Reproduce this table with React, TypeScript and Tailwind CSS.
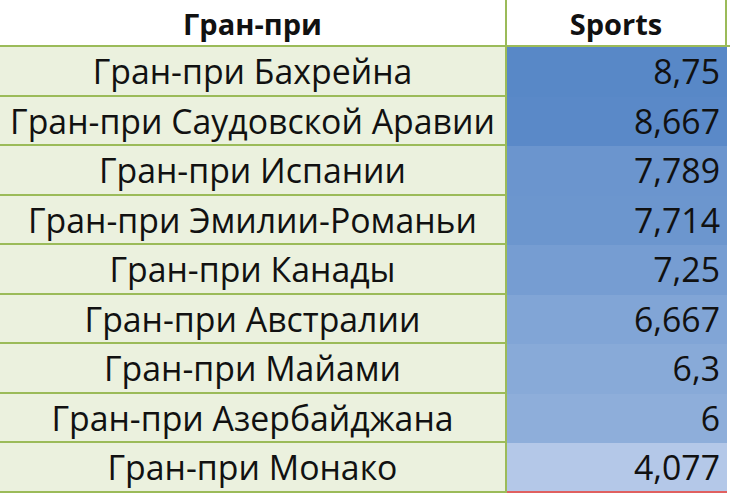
import React from "react";

const rows: [string, string, number][] = [
  ["Гран-при Бахрейна", "8,75", 8.75],
  ["Гран-при Саудовской Аравии", "8,667", 8.667],
  ["Гран-при Испании", "7,789", 7.789],
  ["Гран-при Эмилии-Романьи", "7,714", 7.714],
  ["Гран-при Канады", "7,25", 7.25],
  ["Гран-при Австралии", "6,667", 6.667],
  ["Гран-при Майами", "6,3", 6.3],
  ["Гран-при Азербайджана", "6", 6],
  ["Гран-при Монако", "4,077", 4.077],
];

const c0 = [88, 136, 199];
const c1 = [180, 200, 232];
function colorFor(v: number) {
  const t = (8.75 - v) / (8.75 - 4.077);
  const c = c0.map((a, i) => Math.round(a + (c1[i] - a) * t));
  return `rgb(${c[0]},${c[1]},${c[2]})`;
}

export default function App() {
  return (
    <div
      className="w-[730px] h-[495px] bg-white overflow-hidden text-[#111]"
      style={{ fontFamily: '"Open Sans", "Noto Sans", sans-serif' }}
    >
      <div className="flex h-[47px] border-b-2 border-[#9bbb59]">
        <div className="w-[507px] flex items-center justify-center border-r-2 border-[#9bbb59] text-[29px] font-bold pt-[2px]">
          Гран-при
        </div>
        <div className="w-[220px] flex items-center justify-center border-r-2 border-[#9bbb59] text-[29px] font-bold pt-[2px]">
          Sports
        </div>
      </div>
      {rows.map(([name, val, v], i) => (
        <div key={i} className="flex h-[49.5px]">
          <div className="w-[507px] flex items-center justify-center bg-[#ebf1de] border-r-2 border-b-2 border-[#9bbb59] text-[33.8px] leading-none pt-[3px]">
            {name}
          </div>
          <div
            className={`w-[220px] flex items-center justify-end pr-[7px] pt-[3px] text-[33.8px] leading-none border-b-2 ${
              i === rows.length - 1 ? "border-[#e06060]" : "border-transparent"
            }`}
            style={{ backgroundColor: colorFor(v) }}
          >
            {val}
          </div>
        </div>
      ))}
    </div>
  );
}
